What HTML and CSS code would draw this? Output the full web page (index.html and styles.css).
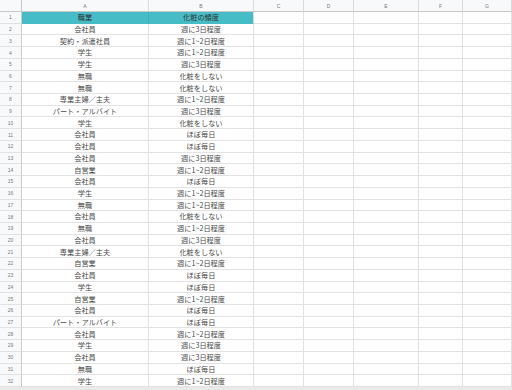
FILE: index.html
```html
<!DOCTYPE html>
<html lang="ja">
<head>
<meta charset="utf-8">
<link rel="stylesheet" href="styles.css">
</head>
<body>
<div class="sheet">
  <div class="r hd"><div class="n corner"></div><div class="c">A</div><div class="c">B</div><div class="c">C</div><div class="c">D</div><div class="c">E</div><div class="c">F</div><div class="c">G</div></div>
  <div class="r top"><div class="n">1</div><div class="c">職業</div><div class="c">化粧の頻度</div><i></i><i></i><i></i><i></i><i></i></div>
  <div class="r"><div class="n">2</div><div class="c">会社員</div><div class="c">週に3日程度</div><i></i><i></i><i></i><i></i><i></i></div>
  <div class="r"><div class="n">3</div><div class="c">契約・派遣社員</div><div class="c">週に1~2日程度</div><i></i><i></i><i></i><i></i><i></i></div>
  <div class="r"><div class="n">4</div><div class="c">学生</div><div class="c">週に1~2日程度</div><i></i><i></i><i></i><i></i><i></i></div>
  <div class="r"><div class="n">5</div><div class="c">学生</div><div class="c">週に3日程度</div><i></i><i></i><i></i><i></i><i></i></div>
  <div class="r"><div class="n">6</div><div class="c">無職</div><div class="c">化粧をしない</div><i></i><i></i><i></i><i></i><i></i></div>
  <div class="r"><div class="n">7</div><div class="c">無職</div><div class="c">化粧をしない</div><i></i><i></i><i></i><i></i><i></i></div>
  <div class="r"><div class="n">8</div><div class="c">専業主婦／主夫</div><div class="c">週に1~2日程度</div><i></i><i></i><i></i><i></i><i></i></div>
  <div class="r"><div class="n">9</div><div class="c">パート・アルバイト</div><div class="c">週に3日程度</div><i></i><i></i><i></i><i></i><i></i></div>
  <div class="r"><div class="n">10</div><div class="c">学生</div><div class="c">化粧をしない</div><i></i><i></i><i></i><i></i><i></i></div>
  <div class="r"><div class="n">11</div><div class="c">会社員</div><div class="c">ほぼ毎日</div><i></i><i></i><i></i><i></i><i></i></div>
  <div class="r"><div class="n">12</div><div class="c">会社員</div><div class="c">ほぼ毎日</div><i></i><i></i><i></i><i></i><i></i></div>
  <div class="r"><div class="n">13</div><div class="c">会社員</div><div class="c">週に3日程度</div><i></i><i></i><i></i><i></i><i></i></div>
  <div class="r"><div class="n">14</div><div class="c">自営業</div><div class="c">週に1~2日程度</div><i></i><i></i><i></i><i></i><i></i></div>
  <div class="r"><div class="n">15</div><div class="c">会社員</div><div class="c">ほぼ毎日</div><i></i><i></i><i></i><i></i><i></i></div>
  <div class="r"><div class="n">16</div><div class="c">学生</div><div class="c">週に1~2日程度</div><i></i><i></i><i></i><i></i><i></i></div>
  <div class="r"><div class="n">17</div><div class="c">無職</div><div class="c">週に1~2日程度</div><i></i><i></i><i></i><i></i><i></i></div>
  <div class="r"><div class="n">18</div><div class="c">会社員</div><div class="c">化粧をしない</div><i></i><i></i><i></i><i></i><i></i></div>
  <div class="r"><div class="n">19</div><div class="c">無職</div><div class="c">週に1~2日程度</div><i></i><i></i><i></i><i></i><i></i></div>
  <div class="r"><div class="n">20</div><div class="c">会社員</div><div class="c">週に3日程度</div><i></i><i></i><i></i><i></i><i></i></div>
  <div class="r"><div class="n">21</div><div class="c">専業主婦／主夫</div><div class="c">化粧をしない</div><i></i><i></i><i></i><i></i><i></i></div>
  <div class="r"><div class="n">22</div><div class="c">自営業</div><div class="c">週に1~2日程度</div><i></i><i></i><i></i><i></i><i></i></div>
  <div class="r"><div class="n">23</div><div class="c">会社員</div><div class="c">ほぼ毎日</div><i></i><i></i><i></i><i></i><i></i></div>
  <div class="r"><div class="n">24</div><div class="c">学生</div><div class="c">ほぼ毎日</div><i></i><i></i><i></i><i></i><i></i></div>
  <div class="r"><div class="n">25</div><div class="c">自営業</div><div class="c">週に1~2日程度</div><i></i><i></i><i></i><i></i><i></i></div>
  <div class="r"><div class="n">26</div><div class="c">会社員</div><div class="c">ほぼ毎日</div><i></i><i></i><i></i><i></i><i></i></div>
  <div class="r"><div class="n">27</div><div class="c">パート・アルバイト</div><div class="c">ほぼ毎日</div><i></i><i></i><i></i><i></i><i></i></div>
  <div class="r"><div class="n">28</div><div class="c">会社員</div><div class="c">週に1~2日程度</div><i></i><i></i><i></i><i></i><i></i></div>
  <div class="r"><div class="n">29</div><div class="c">学生</div><div class="c">週に3日程度</div><i></i><i></i><i></i><i></i><i></i></div>
  <div class="r"><div class="n">30</div><div class="c">会社員</div><div class="c">週に3日程度</div><i></i><i></i><i></i><i></i><i></i></div>
  <div class="r"><div class="n">31</div><div class="c">無職</div><div class="c">ほぼ毎日</div><i></i><i></i><i></i><i></i><i></i></div>
  <div class="r"><div class="n">32</div><div class="c">学生</div><div class="c">週に1~2日程度</div><i></i><i></i><i></i><i></i><i></i></div>
  <div class="scroll"></div>
</div>
</body>
</html>
```
FILE: styles.css
```css
html, body {
  margin: 0;
  padding: 0;
  background: #ffffff;
  overflow: hidden;
}
.sheet {
  width: 512px;
  height: 390px;
  display: flex;
  flex-direction: column;
  font-family: "Noto Sans CJK JP", "Noto Sans", sans-serif;
  overflow: hidden;
}
.r {
  display: grid;
  grid-template-columns: 22px 127px 105px 50px 50px 65px 44px 1fr;
  height: 11.72px;
  flex: none;
}
.r > * {
  box-sizing: border-box;
  border-right: 1px solid #e2e2e2;
  border-bottom: 1px solid #e2e2e2;
  display: flex;
  align-items: center;
  justify-content: center;
  overflow: hidden;
  white-space: nowrap;
}
.c {
  font-size: 7.2px;
  color: #4a4a4a;
  line-height: 1;
  padding-top: 1px;
}
.n {
  background: #f8f9fa;
  font-family: "Liberation Sans", Arial, sans-serif;
  font-size: 5px;
  color: #7a7a7a;
  border-right-color: #c8c8c8 !important;
}
.hd {
  height: 12px;
}
.hd > * {
  background: #f8f9fa;
  border-bottom-color: #c8c8c8;
  border-right-color: #dadada;
}
.hd .c {
  font-family: "Liberation Sans", Arial, sans-serif;
  font-size: 5px;
  color: #7a7a7a;
}
.hd .corner {
  border-right-color: #c8c8c8;
}
.top .c {
  background: #46bdc6;
  color: #333333;
  border-bottom-color: #46bdc6;
  border-right-color: #40afb7;
}
.top .c + .c {
  border-right-color: #dcdcdc;
}
.scroll {
  flex: 1;
  background: #e9e9e9;
}
```
